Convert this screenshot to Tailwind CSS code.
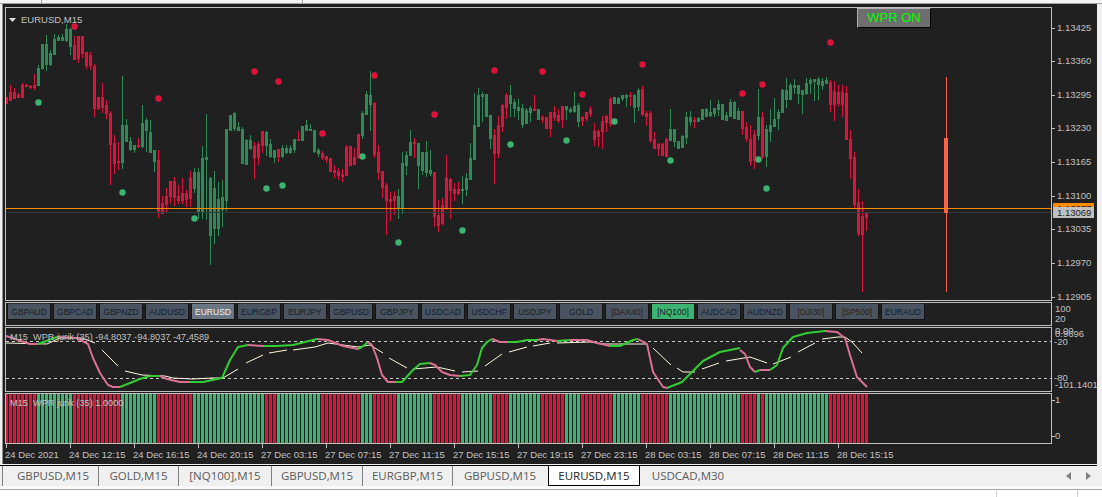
<!DOCTYPE html>
<html>
<head>
<meta charset="utf-8">
<script src="https://cdn.jsdelivr.net/npm/@tailwindcss/browser@4"></script>
</head>
<body class="bg-[#f0f0f0] overflow-hidden">
<div class="w-[1102px] h-[497px] flex flex-col overflow-hidden font-['Liberation_Sans',Arial,sans-serif] bg-[#f0f0f0]">
  <div class="h-[3px] flex-none bg-[#f4f4f4] flex">
    <div class="w-[42px] flex-none border-r border-[#a0a0a0]"></div>
    <div class="w-[261px] flex-none border-r border-[#a0a0a0]"></div>
  </div>
  <div class="h-[1px] flex-none bg-[#a0a0a0]"></div>
  <!-- chart window -->
  <div class="flex-none h-[460px] w-[1095px] ml-[2px] border-l border-[#909090] bg-[#202020] pt-[3px] pl-[2px] flex flex-col gap-[1px] text-[9.5px] leading-[12px] text-[#c0c0c0]">
    <!-- main chart -->
    <div class="flex h-[294px] flex-none">
      <div class="relative w-[1047px] flex-none border border-[#c0c0c0]">
        <svg id="main" class="block w-full h-full" viewBox="6 8 1045 292"></svg>
        <div class="absolute left-[3px] top-[6px] flex items-center gap-[5px] text-[#c0c0c0] text-[9.5px] leading-[12px]">
          <svg class="w-[7px] h-[4px]" viewBox="0 0 7 4"><polygon points="0,0 7,0 3.5,4" fill="#e0e0e0"/></svg>
          <span>EURUSD,M15</span>
        </div>
        <div class="absolute left-[851px] top-0 w-[74px] h-[20px] bg-[#6e6e6e] border-t border-l border-t-[#b0b0b0] border-l-[#b0b0b0] border-r border-b border-r-black border-b-black text-[#00ff00] text-[13px] leading-[18px] text-center">WPR ON</div>
      </div>
      <div class="relative flex-1">
        <div class="absolute left-0 top-[15px] flex items-center gap-[2px]"><i class="w-[3px] h-px bg-[#c0c0c0]"></i><span>1.13425</span></div>
        <div class="absolute left-0 top-[48px] flex items-center gap-[2px]"><i class="w-[3px] h-px bg-[#c0c0c0]"></i><span>1.13360</span></div>
        <div class="absolute left-0 top-[82px] flex items-center gap-[2px]"><i class="w-[3px] h-px bg-[#c0c0c0]"></i><span>1.13295</span></div>
        <div class="absolute left-0 top-[115px] flex items-center gap-[2px]"><i class="w-[3px] h-px bg-[#c0c0c0]"></i><span>1.13230</span></div>
        <div class="absolute left-0 top-[149px] flex items-center gap-[2px]"><i class="w-[3px] h-px bg-[#c0c0c0]"></i><span>1.13165</span></div>
        <div class="absolute left-0 top-[183px] flex items-center gap-[2px]"><i class="w-[3px] h-px bg-[#c0c0c0]"></i><span>1.13100</span></div>
        <div class="absolute left-0 top-[216px] flex items-center gap-[2px]"><i class="w-[3px] h-px bg-[#c0c0c0]"></i><span>1.13035</span></div>
        <div class="absolute left-0 top-[250px] flex items-center gap-[2px]"><i class="w-[3px] h-px bg-[#c0c0c0]"></i><span>1.12970</span></div>
        <div class="absolute left-0 top-[284px] flex items-center gap-[2px]"><i class="w-[3px] h-px bg-[#c0c0c0]"></i><span>1.12905</span></div>
        <div class="absolute left-[1px] top-[196px] w-[41px] h-[11px] bg-[#ff8c00] pl-[4px] text-[#202020]">1.13077</div>
        <div class="absolute left-[1px] top-[200px] w-[41px] h-[11px] bg-[#c0c0c0] pl-[4px] text-[#202020] leading-[11px]">1.13069</div>
      </div>
    </div>
    <!-- button strip -->
    <div class="flex h-[24px] flex-none">
      <div class="w-[1047px] flex-none border border-[#c0c0c0] flex gap-[2px] pl-[1px] text-[8.5px]">
        <div class="w-[44px] h-[17px] flex-none flex items-center justify-center bg-[#4a5460] border border-[#151515] border-t-[#2a2a2a] text-[#141c2a]">GBPAUD</div>
        <div class="w-[44px] h-[17px] flex-none flex items-center justify-center bg-[#4a5460] border border-[#151515] border-t-[#2a2a2a] text-[#141c2a]">GBPCAD</div>
        <div class="w-[44px] h-[17px] flex-none flex items-center justify-center bg-[#4a5460] border border-[#151515] border-t-[#2a2a2a] text-[#141c2a]">GBPNZD</div>
        <div class="w-[44px] h-[17px] flex-none flex items-center justify-center bg-[#4a5460] border border-[#151515] border-t-[#2a2a2a] text-[#141c2a]">AUDUSD</div>
        <div class="w-[44px] h-[17px] flex-none flex items-center justify-center bg-[#6a7684] border border-[#151515] border-t-[#2a2a2a] text-[#f0f0f0]">EURUSD</div>
        <div class="w-[44px] h-[17px] flex-none flex items-center justify-center bg-[#4a5460] border border-[#151515] border-t-[#2a2a2a] text-[#141c2a]">EURGBP</div>
        <div class="w-[44px] h-[17px] flex-none flex items-center justify-center bg-[#4a5460] border border-[#151515] border-t-[#2a2a2a] text-[#141c2a]">EURJPY</div>
        <div class="w-[44px] h-[17px] flex-none flex items-center justify-center bg-[#4a5460] border border-[#151515] border-t-[#2a2a2a] text-[#141c2a]">GBPUSD</div>
        <div class="w-[44px] h-[17px] flex-none flex items-center justify-center bg-[#4a5460] border border-[#151515] border-t-[#2a2a2a] text-[#141c2a]">GBPJPY</div>
        <div class="w-[44px] h-[17px] flex-none flex items-center justify-center bg-[#4a5460] border border-[#151515] border-t-[#2a2a2a] text-[#141c2a]">USDCAD</div>
        <div class="w-[44px] h-[17px] flex-none flex items-center justify-center bg-[#4a5460] border border-[#151515] border-t-[#2a2a2a] text-[#141c2a]">USDCHF</div>
        <div class="w-[44px] h-[17px] flex-none flex items-center justify-center bg-[#4a5460] border border-[#151515] border-t-[#2a2a2a] text-[#141c2a]">USDJPY</div>
        <div class="w-[44px] h-[17px] flex-none flex items-center justify-center bg-[#4a5460] border border-[#151515] border-t-[#2a2a2a] text-[#141c2a]">GOLD</div>
        <div class="w-[44px] h-[17px] flex-none flex items-center justify-center bg-[#4a5460] border border-[#151515] border-t-[#2a2a2a] text-[#2a2015]">[DAX40]</div>
        <div class="w-[44px] h-[17px] flex-none flex items-center justify-center bg-[#3cb371] border border-[#151515] border-t-[#2a2a2a] text-[#141c2a]">[NQ100]</div>
        <div class="w-[44px] h-[17px] flex-none flex items-center justify-center bg-[#4a5460] border border-[#151515] border-t-[#2a2a2a] text-[#141c2a]">AUDCAD</div>
        <div class="w-[44px] h-[17px] flex-none flex items-center justify-center bg-[#4a5460] border border-[#151515] border-t-[#2a2a2a] text-[#141c2a]">AUDNZD</div>
        <div class="w-[44px] h-[17px] flex-none flex items-center justify-center bg-[#4a5460] border border-[#151515] border-t-[#2a2a2a] text-[#2a2015]">[DJI30]</div>
        <div class="w-[44px] h-[17px] flex-none flex items-center justify-center bg-[#4a5460] border border-[#151515] border-t-[#2a2a2a] text-[#2a2015]">[SP500]</div>
        <div class="w-[44px] h-[17px] flex-none flex items-center justify-center bg-[#4a5460] border border-[#151515] border-t-[#2a2a2a] text-[#141c2a]">EURAUD</div>
      </div>
      <div class="relative flex-1">
        <div class="absolute left-[3px] top-[1px]">100</div>
        <div class="absolute left-[3px] top-[11px]">20</div>
      </div>
    </div>
    <!-- WPR panel -->
    <div class="flex h-[65px] flex-none">
      <div class="relative w-[1047px] flex-none border border-[#c0c0c0]">
        <svg id="wpr" class="block w-full h-full" viewBox="6 328 1045 63"></svg>
        <div class="absolute left-[4px] top-[3px] whitespace-pre text-[#c0c0c0] text-[9.2px]">M15  WPR jurik (35) -94.8037 -94.8037 -47.4589</div>
      </div>
      <div class="relative flex-1">
        <div class="absolute left-[3px] top-[-2px]">0.00</div>
        <div class="absolute left-[3px] top-[1px]">0.9696</div>
        <div class="absolute left-[2px] top-[9px]">-20</div>
        <div class="absolute left-[2px] top-[45px]">-80</div>
        <div class="absolute left-[3px] top-[52px]">-101.1401</div>
      </div>
    </div>
    <!-- histogram panel -->
    <div class="flex h-[51px] flex-none">
      <div class="relative w-[1047px] flex-none border border-[#c0c0c0]">
        <svg id="hist" class="block w-full h-full" viewBox="6 394 1045 49"></svg>
        <div class="absolute left-[4px] top-[3px] whitespace-pre text-[#c0c0c0] text-[9.2px]">M15  WPR jurik (35) 1.0000</div>
      </div>
      <div class="relative flex-1">
        <div class="absolute left-0 top-[1px] flex items-center"><i class="w-[3px] h-px bg-[#c0c0c0]"></i><span>1</span></div>
        <div class="absolute left-0 top-[37px] flex items-center"><i class="w-[3px] h-px bg-[#c0c0c0]"></i><span>0</span></div>
      </div>
    </div>
    <!-- time axis -->
    <div class="flex -mt-[1px] pl-[1px] h-[21px]">
      <div class="w-[64px] flex-none"><i class="block w-px h-[4px] bg-[#c0c0c0]"></i><span class="block -ml-[1px] mt-[1px] whitespace-nowrap">24 Dec 2021</span></div>
      <div class="w-[64px] flex-none"><i class="block w-px h-[4px] bg-[#c0c0c0]"></i><span class="block -ml-[1px] mt-[1px] whitespace-nowrap">24 Dec 12:15</span></div>
      <div class="w-[64px] flex-none"><i class="block w-px h-[4px] bg-[#c0c0c0]"></i><span class="block -ml-[1px] mt-[1px] whitespace-nowrap">24 Dec 16:15</span></div>
      <div class="w-[64px] flex-none"><i class="block w-px h-[4px] bg-[#c0c0c0]"></i><span class="block -ml-[1px] mt-[1px] whitespace-nowrap">24 Dec 20:15</span></div>
      <div class="w-[64px] flex-none"><i class="block w-px h-[4px] bg-[#c0c0c0]"></i><span class="block -ml-[1px] mt-[1px] whitespace-nowrap">27 Dec 03:15</span></div>
      <div class="w-[64px] flex-none"><i class="block w-px h-[4px] bg-[#c0c0c0]"></i><span class="block -ml-[1px] mt-[1px] whitespace-nowrap">27 Dec 07:15</span></div>
      <div class="w-[64px] flex-none"><i class="block w-px h-[4px] bg-[#c0c0c0]"></i><span class="block -ml-[1px] mt-[1px] whitespace-nowrap">27 Dec 11:15</span></div>
      <div class="w-[64px] flex-none"><i class="block w-px h-[4px] bg-[#c0c0c0]"></i><span class="block -ml-[1px] mt-[1px] whitespace-nowrap">27 Dec 15:15</span></div>
      <div class="w-[64px] flex-none"><i class="block w-px h-[4px] bg-[#c0c0c0]"></i><span class="block -ml-[1px] mt-[1px] whitespace-nowrap">27 Dec 19:15</span></div>
      <div class="w-[64px] flex-none"><i class="block w-px h-[4px] bg-[#c0c0c0]"></i><span class="block -ml-[1px] mt-[1px] whitespace-nowrap">27 Dec 23:15</span></div>
      <div class="w-[64px] flex-none"><i class="block w-px h-[4px] bg-[#c0c0c0]"></i><span class="block -ml-[1px] mt-[1px] whitespace-nowrap">28 Dec 03:15</span></div>
      <div class="w-[64px] flex-none"><i class="block w-px h-[4px] bg-[#c0c0c0]"></i><span class="block -ml-[1px] mt-[1px] whitespace-nowrap">28 Dec 07:15</span></div>
      <div class="w-[64px] flex-none"><i class="block w-px h-[4px] bg-[#c0c0c0]"></i><span class="block -ml-[1px] mt-[1px] whitespace-nowrap">28 Dec 11:15</span></div>
      <div class="w-[64px] flex-none"><i class="block w-px h-[4px] bg-[#c0c0c0]"></i><span class="block -ml-[1px] mt-[1px] whitespace-nowrap">28 Dec 15:15</span></div>
    </div>
  </div>
  <div class="h-[2px] flex-none w-[1097px] bg-[#f4f4f4] border-b border-black"></div>
  <!-- tab bar -->
  <div class="h-[20px] flex-none relative flex items-stretch pl-[2px] font-['Open_Sans',sans-serif] text-[11.5px] text-[#5a5a5a] bg-[#f0f0f0]">
    <div class="w-[97px] flex-none flex items-center justify-center pl-[5px] border-l border-r border-l-[#808080] border-r-[#808080]">GBPUSD,M15</div>
    <div class="w-[80px] flex-none flex items-center justify-center border-r border-[#808080]">GOLD,M15</div>
    <div class="w-[93px] flex-none flex items-center justify-center border-r border-[#808080]">[NQ100],M15</div>
    <div class="w-[91px] flex-none flex items-center justify-center border-r border-[#808080]">GBPUSD,M15</div>
    <div class="w-[90px] flex-none flex items-center justify-center border-r border-[#808080]">EURGBP,M15</div>
    <div class="w-[95px] flex-none flex items-center justify-center pr-[1px]">GBPUSD,M15</div>
    <div class="w-[92px] flex-none flex items-center justify-center bg-white border border-t-0 border-black text-[#222222]">EURUSD,M15</div>
    <div class="w-[94px] flex-none flex items-center justify-center pl-[2px]">USDCAD,M30</div>
    <svg class="absolute left-[1066px] top-[6px] w-[5px] h-[8px]" viewBox="0 0 5 8"><polygon points="5,0 5,8 0,4" fill="#808080"/></svg>
    <svg class="absolute left-[1086px] top-[6px] w-[5px] h-[8px]" viewBox="0 0 5 8"><polygon points="0,0 0,8 5,4" fill="#808080"/></svg>
  </div>
  <div class="h-[3px] flex-none bg-[#fafafa]"></div>
  <div class="h-[1px] flex-none bg-[#a8a8a8]"></div>
  <div class="flex-1 bg-white flex">
    <div class="w-[997px] flex-none border-r border-[#d0d0d0]"></div>
    <div class="w-[81px] flex-none border-r border-[#d0d0d0]"></div>
  </div>
</div>
<script>
var NS='http://www.w3.org/2000/svg';
function el(p,n,a){var e=document.createElementNS(NS,n);for(var k in a)e.setAttribute(k,a[k]);p.appendChild(e);return e;}
var main=document.getElementById('main'),wpr=document.getElementById('wpr'),hist=document.getElementById('hist');
var cs=[
'R97,103,97,104','R92,100,85,100','R92,98,88,99','R95,97,93,98','R85,97,83,97','R85,86,84,87','R86,87,85,89','R85,87,74,90',
'G68,85,65,86','G44,68,44,70','G44,64,35,71','G53,64,50,66','G39,54,34,54','G37,40,35,41','G37,40,34,41','G29,40,24,42','G29,46,28,55',
'R45,59,36,60','R36,58,36,63','R36,53,36,58','R52,65,52,69','R55,65,52,70','R66,108,64,117','R97,108,97,110','R97,107,83,113','R105,113,100,119','R113,144,111,185','R143,163,135,174','R161,162,142,170',
'G125,162,76,169','G125,141,119,141','G141,149,137,151','G145,149,145,153','R145,146,138,148','G123,146,105,148','G120,130,118,152','G132,152,120,153','G150,161,150,172',
'R160,212,150,218','R203,213,196,213','R196,204,188,213','R181,196,181,204','R181,197,177,206','R196,200,185,204','R193,200,178,204','R193,199,190,207','R178,198,171,207',
'G172,188,168,193','G172,212,168,219','G158,212,146,219','G157,159,114,220','G178,235,177,265','G188,228,171,244','G199,228,182,236','G197,209,180,227','G129,200,129,211','G115,130,115,131','G113,128,112,131','G127,130,122,131','G129,163,127,164','G140,164,139,164','G140,148,135,150',
'R146,157,142,179','R144,157,142,165','R131,145,131,153','G132,145,131,156','G144,156,139,158','G150,157,150,163','R149,156,149,162','G148,156,145,158','G148,152,145,154','G148,152,145,154',
'G139,149,139,153','R139,140,131,141','G126,140,126,141','G125,130,120,131','G129,130,124,131','G130,151,130,153','G150,153,148,157',
'R153,157,151,160','R156,159,156,163','R158,171,158,172','R170,172,165,178','R171,175,168,180','R174,176,169,182','R147,175,145,176','R146,165,146,165','R157,164,148,165','R134,157,134,159',
'G113,135,111,139','G94,114,91,114','G95,104,71,131',
'R103,154,102,158','R152,172,145,180','R171,187,171,198','R185,200,183,235','R199,201,192,221','R196,200,191,215',
'G196,207,189,219','G163,207,152,214','G155,165,151,175','G142,155,130,156','R142,143,138,158','G143,165,143,189','G152,170,152,175','G152,172,141,177','G170,173,150,176',
'R172,216,172,227','R215,225,200,232','R205,223,198,225','R178,207,155,210','R179,190,178,219','R189,193,183,201','R189,193,182,195',
'G189,190,176,204','G178,189,173,196','G158,179,143,179','G125,159,93,160','G95,126,88,126','G94,96,92,122','G94,116,94,116','G115,138,115,149',
'R135,153,129,184','R125,153,116,158','R105,126,104,132','R95,107,93,119',
'G95,103,85,117','G102,108,99,117','G107,110,99,120','G108,124,104,128','G110,123,108,123','G108,112,106,122','R109,110,95,110','G109,119,109,119','R117,119,115,123','R117,128,117,128','R112,128,112,137','R112,117,106,121','R115,120,109,123','R106,119,106,128',
'G106,109,106,120','G109,111,107,113','G106,111,92,113','G105,121,103,127','R117,120,116,126','R112,118,112,121','R109,113,106,117','R131,139,123,146','R131,136,129,147','R121,131,116,149','R116,122,115,132','R99,123,97,127',
'G97,103,97,103','G98,103,97,103','G95,98,95,101','G95,97,94,107','R95,96,92,106','G95,107,94,123','G90,106,88,111',
'R89,114,86,116','R113,116,111,126','R113,140,111,143','R139,148,132,148','R144,148,143,156','R144,155,143,156','R139,156,138,156',
'G129,140,109,140','G129,141,129,147','G141,148,141,149','G136,147,135,148','G117,137,112,144','G117,121,111,126','R120,121,117,128','G118,121,117,122','G109,119,109,120','G109,116,108,117','G112,115,100,117','G108,113,108,117','G104,109,100,116','G104,119,104,120','G115,120,112,120','G102,116,99,116','G102,118,101,119','G111,119,108,120',
'R111,128,111,135','R127,138,122,142','R139,161,125,166','R134,160,130,169','G117,135,89,140','R117,156,112,159','G129,156,125,167','G125,131,109,142','G119,126,98,126','G112,118,109,130','G90,112,89,113','G90,99,78,108','G85,99,83,99','G85,87,79,94','G85,93,85,104','G90,94,90,114','G83,93,78,95','G80,83,78,94','G79,81,79,101','G79,84,77,100','G81,85,78,90','G80,83,77,84',
'R82,104,80,112','R91,104,81,121','R92,103,85,107','R92,104,85,117','R93,139,86,140','R139,158,130,179','R157,204,152,209','R202,233,189,236','R216,234,201,292','R212,217,212,231'
];
cs.forEach(function(s,i){
  var c=s[0]=='R'?'#dc143c':'#2e8b57',v=s.slice(1).split(',').map(Number),x=6+4*i;
  el(main,'rect',{x:x,y:v[2],width:1,height:v[3]-v[2],fill:c,'shape-rendering':'crispEdges'});
  el(main,'rect',{x:x-1,y:v[0],width:3,height:v[1]-v[0]+1,fill:c,'shape-rendering':'crispEdges'});
});
[[74,26],[254,71],[278,81],[158,98],[322,133],[374,75],[494,70],[542,71],[434,114],[582,94],[642,64],[742,93],[762,84],[830,42]].forEach(function(p){el(main,'circle',{cx:p[0]+.5,cy:p[1]+.5,r:3.2,fill:'#dc143c'});});
[[38,102],[122,192],[194,218],[266,188],[282,185],[362,156],[398,242],[462,230],[510,144],[566,140],[614,121],[670,160],[758,159],[766,188]].forEach(function(p){el(main,'circle',{cx:p[0]+.5,cy:p[1]+.5,r:3.2,fill:'#3cb371'});});
el(main,'rect',{x:6,y:212,width:1046,height:1,fill:'#2f3a3a','shape-rendering':'crispEdges'});
el(main,'rect',{x:946,y:77,width:1,height:215,fill:'#ff6347','shape-rendering':'crispEdges'});
el(main,'rect',{x:944,y:138,width:4,height:75,fill:'#ff6347','shape-rendering':'crispEdges'});
el(main,'rect',{x:6,y:208,width:1046,height:1,fill:'#ff8c00','shape-rendering':'crispEdges'});
// WPR
[341,378].forEach(function(y){el(wpr,'line',{x1:6,x2:1051,y1:y+.5,y2:y+.5,stroke:'#c8c8c8','stroke-dasharray':'3 3','stroke-width':1});});
var sig=[[[6,343],[47,344],[60,338],[82,338],[95,343]],[[102,350],[118,366]],[[125,371],[142,375],[165,376],[173,378],[192,379],[213,378],[223,378],[238,369]],[[246,363],[263,355]],[[269,353],[287,350]],[[293,350],[315,347],[328,343],[358,347],[370,345],[383,353]],[[389,358],[407,368]],[[413,369],[437,367],[455,371]],[[462,372],[478,371]],[[485,366],[502,354]],[[509,352],[527,347]],[[533,346],[550,343]],[[557,343],[590,342],[605,344],[647,344]],[[653,348],[671,365]],[[677,368],[683,372],[695,372]],[[702,369],[719,363]],[[726,361],[750,357],[767,363]],[[773,364],[791,357]],[[798,352],[815,343]],[[822,339],[838,337],[845,337],[852,342],[862,353]]];
sig.forEach(function(l){el(wpr,'polyline',{points:l.join(' '),fill:'none',stroke:'#fff8dc','stroke-width':1});});
var segs=[
['p',[[6,336],[30,344],[38,344]]],['g',[[38,344],[57,337]]],['p',[[57,337],[77,338],[88,344],[93,358],[100,373],[108,385],[113,387],[120,387]]],
['g',[[120,387],[140,379],[150,376],[160,376]]],['p',[[160,376],[167,379],[180,382],[190,382]]],['g',[[190,382],[203,382],[222,378],[230,360],[238,347],[248,345]]],
['p',[[248,345],[263,346]]],['g',[[263,346],[277,346],[293,345],[317,339]]],['p',[[317,339],[328,340],[343,346],[358,349]]],['g',[[358,349],[362,347],[368,342]]],
['p',[[368,342],[372,345],[377,358],[382,375],[388,382],[395,382]]],['g',[[395,382],[402,382],[413,370],[420,364],[430,363]]],['p',[[430,363],[435,365],[442,372],[450,375],[460,376]]],
['g',[[460,376],[470,375],[477,365],[482,348],[487,342],[492,339]]],['p',[[492,339],[500,342],[508,342]]],['g',[[508,342],[517,342],[527,340],[537,340]]],['p',[[537,340],[543,339],[557,341]]],
['g',[[557,341],[570,340]]],['p',[[570,340],[587,340],[597,343],[610,346]]],['g',[[610,346],[620,346],[633,340],[638,339]]],['p',[[638,339],[647,344],[653,372],[663,387],[667,388]]],
['g',[[667,388],[682,382],[692,372],[703,361],[720,352],[740,348]]],['p',[[740,350],[745,354],[750,367],[755,372]]],['g',[[755,372],[760,370]]],['p',[[760,370],[770,370]]],
['g',[[770,370],[777,365],[783,348],[793,337],[807,333],[825,331]]],['p',[[825,331],[837,332],[845,338],[850,355],[857,377],[867,387]]]
];
segs.forEach(function(s){el(wpr,'polyline',{points:s[1].join(' '),fill:'none',stroke:s[0]=='p'?'#db7093':'#32cd32','stroke-width':2,'stroke-linejoin':'round'});});
// histogram
var runs=[[6,37,0],[37,72,1],[72,120,0],[120,156,1],[156,192,0],[192,264,1],[264,276,0],[276,320,1],[320,360,0],[360,373,1],[373,396,0],[396,432,1],[432,460,0],[460,492,1],[492,508,0],[508,540,1],[540,565,0],[565,580,1],[580,612,0],[612,640,1],[640,668,0],[668,740,1],[740,757,0],[757,761,1],[761,764,0],[764,828,1],[828,868,0]];
for(var i=0;i<216;i++){var x=6+4*i,c='#dc143c';runs.forEach(function(r){if(x>=r[0]&&x<r[1])c=r[2]?'#3cb371':'#dc143c';});
  el(hist,'rect',{x:x-1,y:394,width:3,height:49,fill:c,'shape-rendering':'crispEdges'});}
</script>
</body>
</html>
